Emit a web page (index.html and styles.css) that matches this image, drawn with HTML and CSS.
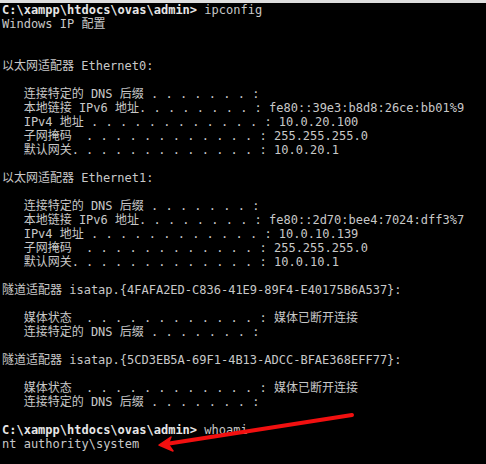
FILE: index.html
```html
<!DOCTYPE html>
<html>
<head>
<meta charset="utf-8">
<link rel="stylesheet" href="styles.css">
</head>
<body>
<div class="titlebar"></div>
<div class="console">
<pre class="output"><span class="prompt">C:\xampp\htdocs\ovas\admin&gt;</span> ipconfig
Windows IP 配置


以太网适配器 Ethernet0:

   连接特定的 DNS 后缀 . . . . . . . :
   本地链接 IPv6 地址. . . . . . . . : fe80::39e3:b8d8:26ce:bb01%9
   IPv4 地址 . . . . . . . . . . . . : 10.0.20.100
   子网掩码  . . . . . . . . . . . . : 255.255.255.0
   默认网关. . . . . . . . . . . . . : 10.0.20.1

以太网适配器 Ethernet1:

   连接特定的 DNS 后缀 . . . . . . . :
   本地链接 IPv6 地址. . . . . . . . : fe80::2d70:bee4:7024:dff3%7
   IPv4 地址 . . . . . . . . . . . . : 10.0.10.139
   子网掩码  . . . . . . . . . . . . : 255.255.255.0
   默认网关. . . . . . . . . . . . . : 10.0.10.1

隧道适配器 isatap.{4FAFA2ED-C836-41E9-89F4-E40175B6A537}:

   媒体状态  . . . . . . . . . . . . : 媒体已断开连接
   连接特定的 DNS 后缀 . . . . . . . :

隧道适配器 isatap.{5CD3EB5A-69F1-4B13-ADCC-BFAE368EFF77}:

   媒体状态  . . . . . . . . . . . . : 媒体已断开连接
   连接特定的 DNS 后缀 . . . . . . . :

<span class="prompt">C:\xampp\htdocs\ovas\admin&gt;</span> whoami
nt authority\system</pre>
<svg class="arrow" width="486" height="461" viewBox="0 0 486 461">
  <line x1="352" y1="412" x2="166" y2="441" stroke="#f21010" stroke-width="4" stroke-linecap="round"/>
  <polygon points="159,442 171,434 168,441 173,448" fill="#f21010" stroke="#f21010" stroke-width="1.5" stroke-linejoin="round"/>
</svg>
</div>
</body>
</html>
```
FILE: styles.css
```css
html, body {
  margin: 0;
  padding: 0;
  background: #000;
  width: 486px;
  height: 464px;
  overflow: hidden;
}
.titlebar {
  height: 3px;
  background: #dedede;
}
.console {
  position: relative;
  height: 461px;
}
.output {
  margin: 0;
  padding: 0 0 0 2px;
  font-family: "DejaVu Sans Mono", "Noto Sans CJK SC", monospace;
  font-size: 12px;
  line-height: 14px;
  color: #c8c8c8;
  white-space: pre;
}
.prompt {
  font-weight: bold;
  color: #e6e6e6;
}
.arrow {
  position: absolute;
  left: 0;
  top: 0;
}
```
